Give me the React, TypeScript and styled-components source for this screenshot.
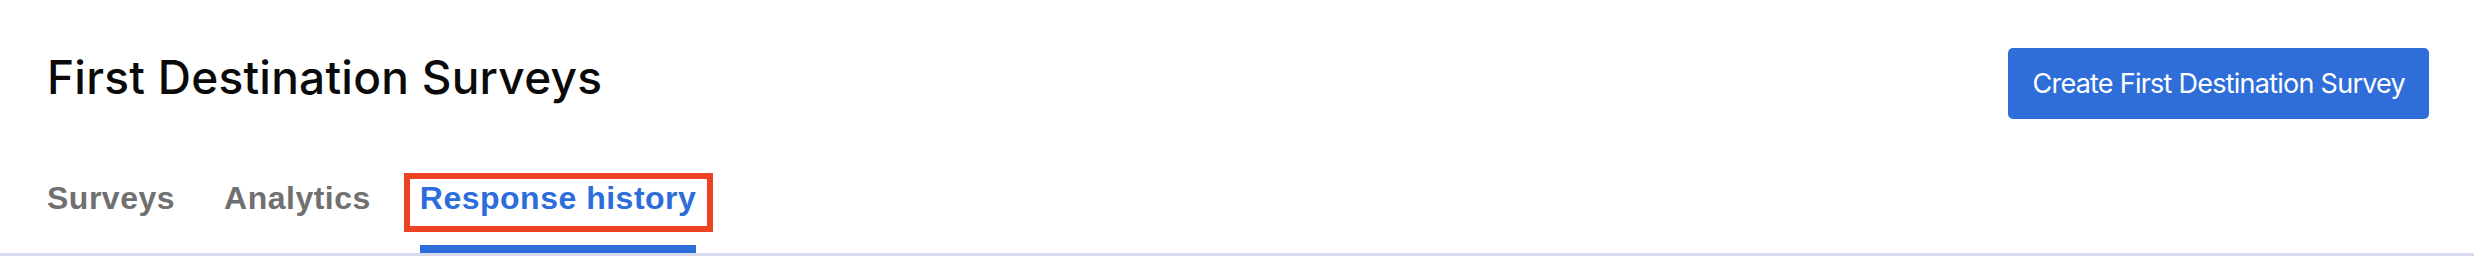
import React from "react";
import styled, { createGlobalStyle } from "styled-components";

const Global = createGlobalStyle`
  html, body { margin: 0; padding: 0; background: #ffffff; }
  body { width: 2474px; height: 256px; overflow: hidden; font-family: "Liberation Sans", Arial, sans-serif; }
  * { box-sizing: border-box; }
`;

const Page = styled.div`
  width: 2474px;
  height: 256px;
  display: flex;
  flex-direction: column;
  background: #ffffff;
`;

const Header = styled.header`
  display: flex;
  justify-content: space-between;
  align-items: flex-start;
  padding: 48px 45px 0 47px;
`;

const Title = styled.h1`
  margin: 2px 0 0 0;
  font-family: "Inter", "Liberation Sans", sans-serif;
  font-weight: 500;
  font-size: 46px;
  line-height: 55px;
  color: #0a0a0a;
  letter-spacing: 0.25px;
`;

const PrimaryButton = styled.button`
  height: 71px;
  padding: 0 24px;
  border: none;
  border-radius: 5px;
  background: #2f6ed8;
  color: #ffffff;
  font-family: "Inter", "Liberation Sans", sans-serif;
  font-size: 27px;
  font-weight: 400;
  letter-spacing: -0.75px;
  cursor: pointer;
`;

const TabBar = styled.nav`
  margin-top: 59px;
  padding-left: 47px;
  display: flex;
  gap: 49px;
  border-bottom: 3px solid #d8dbee;
`;

const Tab = styled.div<{ $active?: boolean }>`
  position: relative;
  font-family: "Liberation Sans", Arial, sans-serif;
  font-weight: 700;
  font-size: 32px;
  letter-spacing: 0.5px;
  line-height: 40px;
  padding-bottom: 27px;
  color: ${(p) => (p.$active ? "#2d6cdb" : "#707070")};
  border-bottom: 8px solid ${(p) => (p.$active ? "#2d6cdb" : "transparent")};
  cursor: pointer;
`;

const Highlight = styled.span`
  position: absolute;
  left: -16px;
  right: -17px;
  top: -5px;
  height: 59px;
  border: 6px solid #ee4224;
  pointer-events: none;
`;

export default function App() {
  return (
    <>
      <Global />
      <Page>
        <Header>
          <Title>First Destination Surveys</Title>
          <PrimaryButton>Create First Destination Survey</PrimaryButton>
        </Header>
        <TabBar>
          <Tab>Surveys</Tab>
          <Tab>Analytics</Tab>
          <Tab $active>
            Response history
            <Highlight />
          </Tab>
        </TabBar>
      </Page>
    </>
  );
}
